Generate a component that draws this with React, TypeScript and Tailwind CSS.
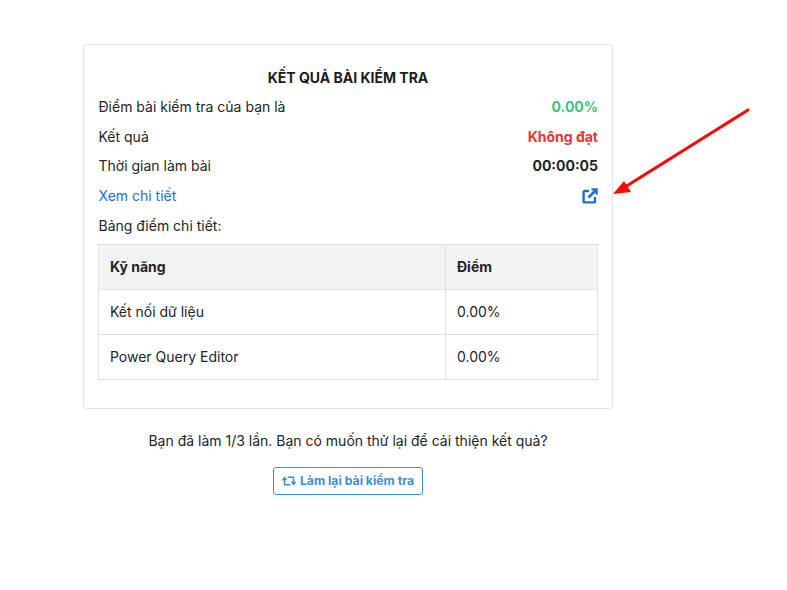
function Row({ label, value, cls }: { label: string; value: string; cls: string }) {
  return (
    <div className="flex h-[29.75px] items-center justify-between pl-[0.5px]">
      <span>{label}</span>
      <span className={`font-bold ${cls}`}>{value}</span>
    </div>
  );
}

export default function App() {
  return (
    <div className="relative h-[590px] w-[787px] overflow-hidden bg-white font-['Inter',sans-serif] text-[14px] text-[#212529]">
      <div className="ml-[83px] flex w-[530px] flex-col items-stretch pt-[44px]">
        <div className="h-[365px] rounded-[4px] border border-[#dee2e6] px-[14px] pt-[22px]">
          <div className="mb-[3.5px] text-center font-bold leading-[21px] text-[#1a1d20]">KẾT QUẢ BÀI KIỂM TRA</div>
          <Row label="Điểm bài kiểm tra của bạn là" value="0.00%" cls="text-[#3dc47e]" />
          <Row label="Kết quả" value="Không đạt" cls="text-[#e63535]" />
          <Row label="Thời gian làm bài" value="00:00:05" cls="text-[#212529]" />
          <div className="flex h-[29.75px] items-center justify-between pl-[0.5px]">
            <span className="text-[#1c6fd6]">Xem chi tiết</span>
            <svg width="16" height="16" viewBox="0 0 16 16" fill="none" className="text-[#1c6fd6]">
              <path d="M7 3H2.6a1 1 0 0 0-1 1v9.4a1 1 0 0 0 1 1H12a1 1 0 0 0 1-1V9" stroke="currentColor" strokeWidth="2.4" />
              <path d="M6.5 9.5 14 2" stroke="currentColor" strokeWidth="2.6" />
              <path d="M9.5 1.4h5.1v5.1" stroke="currentColor" strokeWidth="2.4" />
            </svg>
          </div>
          <div className="flex h-[30px] items-center pl-[0.5px]">Bảng điểm chi tiết:</div>
          <table className="mt-[3.5px] w-[500px] table-fixed border-collapse">
            <thead>
              <tr className="h-[45px] bg-[#f3f3f3] font-bold">
                <th className="w-[347px] border border-[#dee2e6] px-[11px] pb-[2px] text-left">Kỹ năng</th>
                <th className="border border-[#dee2e6] px-[11px] pb-[2px] text-left">Điểm</th>
              </tr>
            </thead>
            <tbody>
              <tr className="h-[45px]">
                <td className="border border-[#dee2e6] px-[11px] pb-[1px]">Kết nối dữ liệu</td>
                <td className="border border-[#dee2e6] px-[11px] pb-[1px]">0.00%</td>
              </tr>
              <tr className="h-[45px]">
                <td className="border border-[#dee2e6] px-[11px] pb-[1px]">Power Query Editor</td>
                <td className="border border-[#dee2e6] px-[11px] pb-[1px]">0.00%</td>
              </tr>
            </tbody>
          </table>
        </div>
        <p className="mt-[21px] text-center leading-[21px]">Bạn đã làm 1/3 lần. Bạn có muốn thử lại để cải thiện kết quả?</p>
        <div className="mt-[16px] flex justify-center">
          <button className="flex h-[28px] w-[150px] items-center justify-center gap-[2px] rounded-[3px] border border-[#3b8fdb] pr-[2px] text-[12.25px] font-bold text-[#3b8fdb]">
            <svg width="18" height="18" viewBox="0 0 24 24" fill="currentColor">
              <path d="M19 7a1 1 0 0 0-1-1h-8v2h7v5h-3l3.969 5L22 13h-3V7zM5 17a1 1 0 0 0 1 1h8v-2H7v-5h3L6 6l-4 5h3v6z" />
            </svg>
            Làm lại bài kiểm tra
          </button>
        </div>
      </div>
      <svg className="absolute left-0 top-0" width="787" height="590" viewBox="0 0 787 590">
        <line x1="748" y1="110" x2="625" y2="187" stroke="#fb0606" strokeWidth="3.2" strokeLinecap="round" />
        <polygon points="613,194 624,181 631,192" fill="#fb0606" />
      </svg>
    </div>
  );
}
